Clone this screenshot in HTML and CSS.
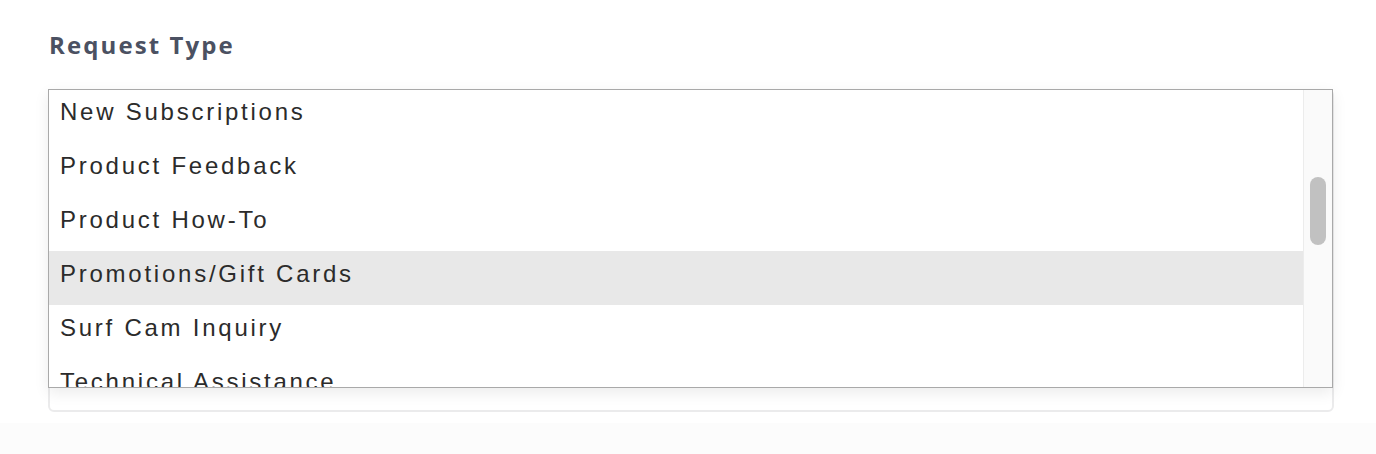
FILE: index.html
```html
<!DOCTYPE html>
<html lang="en">
<head>
<meta charset="utf-8">
<title>Request Type</title>
<link rel="stylesheet" href="styles.css">
</head>
<body>
<main class="page">
  <div class="field">
    <label class="field-label">Request Type</label>
    <div class="control">
      <div class="listbox" role="listbox">
        <ul class="options">
          <li class="option">New Subscriptions</li>
          <li class="option">Product Feedback</li>
          <li class="option">Product How-To</li>
          <li class="option is-active">Promotions/Gift Cards</li>
          <li class="option">Surf Cam Inquiry</li>
          <li class="option">Technical Assistance</li>
        </ul>
        <div class="scrollbar"><div class="thumb"></div></div>
      </div>
    </div>
  </div>
</main>
<footer class="band"></footer>
</body>
</html>
```
FILE: styles.css
```css
* { box-sizing: border-box; }
html, body { margin: 0; padding: 0; background: #ffffff; }
body { height: 454px; overflow: hidden; display: flex; flex-direction: column; }
.page { padding: 28px 42px 0 48px; height: 423px; }
.field { display: flex; flex-direction: column; }
.field-label {
  font-family: "Open Sans", sans-serif;
  font-weight: 700;
  font-size: 24px;
  letter-spacing: 2.1px;
  color: #4b5162;
  line-height: 34px;
  padding-left: 1px;
}
.control {
  position: relative;
  margin-top: 27px;
  height: 323px;
  border: 2px solid #ebebec;
  border-radius: 6px;
}
.listbox {
  position: absolute;
  left: -2px;
  top: -2px;
  width: 1285px;
  height: 299px;
  border: 1px solid #a9a9a9;
  background: #fff;
  box-shadow: 0 5px 14px rgba(0,0,0,0.08);
  display: flex;
  overflow: hidden;
}
.options { list-style: none; margin: -1px 0 0; padding: 0; flex: 1; overflow: hidden; }
.option {
  height: 54px;
  line-height: 46px;
  padding: 0 0 8px 11px;
  font-family: "Liberation Sans", Arial, sans-serif;
  font-size: 24px;
  letter-spacing: 2.75px;
  color: #2b2b2b;
  white-space: nowrap;
}
.option.is-active { background: #e8e8e8; }
.scrollbar {
  width: 29px;
  background: #fafafa;
  border-left: 1px solid #ececec;
  padding: 87px 0 0 6px;
}
.thumb { width: 16px; height: 68px; border-radius: 8px; background: #c1c1c1; }
.band { flex: 1; background: #fcfcfc; }
```
